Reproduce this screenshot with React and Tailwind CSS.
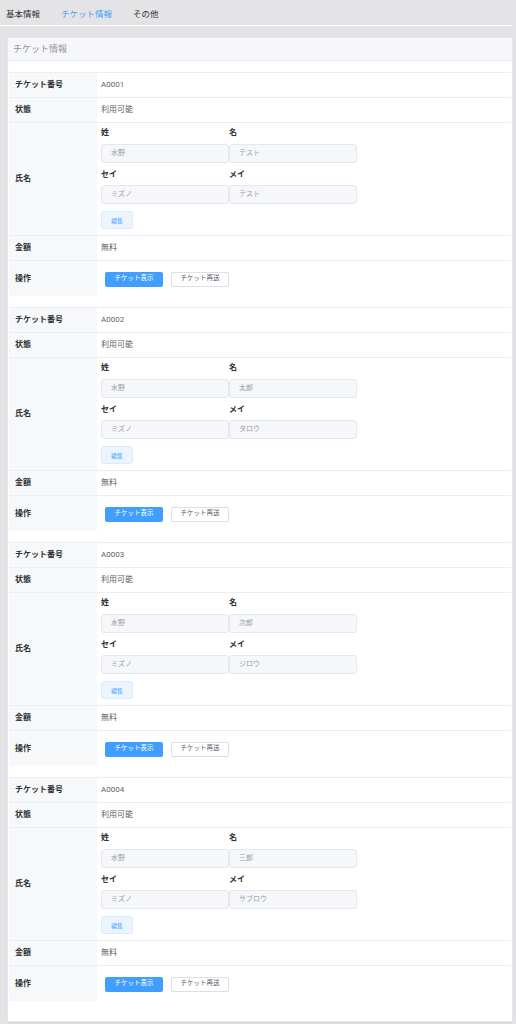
import React from 'react';

const tickets = [
  { no: 'A0001', sei: '水野', mei: 'テスト', seiKana: 'ミズノ', meiKana: 'テスト' },
  { no: 'A0002', sei: '水野', mei: '太郎', seiKana: 'ミズノ', meiKana: 'タロウ' },
  { no: 'A0003', sei: '水野', mei: '次郎', seiKana: 'ミズノ', meiKana: 'ジロウ' },
  { no: 'A0004', sei: '水野', mei: '三郎', seiKana: 'ミズノ', meiKana: 'サブロウ' },
];

const Row = ({ label, children, className = 'h-[25px] border-b border-[#ebeef5]' }) => (
  <div className={`flex ${className}`}>
    <div className="w-[88px] shrink-0 bg-[#f7f8fa] pl-[6px] flex items-center font-bold text-[8px] text-[#303133]">
      {label}
    </div>
    <div className="flex-1 min-w-0 flex items-center">{children}</div>
  </div>
);

const NameField = ({ label }) => (
  <div className="w-[128px]">
    <div className="h-[14px] leading-[14px] font-bold text-[8px] text-[#303133]">{label}</div>
  </div>
);

const Input = ({ value }) => (
  <div className="w-[128px] h-[19px] bg-[#f5f7fa] border border-[#e4e7ed] rounded-[3px] pl-[9px] flex items-center text-[7px] text-[#9a9da3]">
    {value}
  </div>
);

const TicketTable = ({ t }) => (
  <div className="border-t border-[#ebeef5]">
    <Row label="チケット番号">
      <span className="pl-[4px] text-[8px] text-[#606266]">{t.no}</span>
    </Row>
    <Row label="状態">
      <span className="pl-[4px] text-[8px] text-[#606266]">利用可能</span>
    </Row>
    <Row label="氏名" className="border-b border-[#ebeef5]">
      <div className="pl-[4px] pt-[3px] pb-[6px]">
        <div className="flex mb-[4px]">
          <NameField label="姓" />
          <NameField label="名" />
        </div>
        <div className="flex">
          <Input value={t.sei} />
          <Input value={t.mei} />
        </div>
        <div className="flex mt-[5px] mb-[3px]">
          <NameField label="セイ" />
          <NameField label="メイ" />
        </div>
        <div className="flex">
          <Input value={t.seiKana} />
          <Input value={t.meiKana} />
        </div>
        <button className="mt-[7px] w-[32px] h-[18px] rounded-[3px] bg-[#ecf5ff] border border-[#d9ecff] text-[6px] text-[#409eff] flex items-center justify-center">
          編集
        </button>
      </div>
    </Row>
    <Row label="金額">
      <span className="pl-[4px] text-[8px] text-[#606266]">無料</span>
    </Row>
    <Row label="操作" className="h-[35px]">
      <div className="pl-[8px] pt-[1px] flex gap-[8px]">
        <button className="w-[58px] h-[15px] rounded-[2px] bg-[#409eff] text-white text-[6.5px] flex items-center justify-center">
          チケット表示
        </button>
        <button className="w-[58px] h-[15px] rounded-[2px] bg-white border border-[#dcdfe6] text-[#606266] text-[6.5px] flex items-center justify-center">
          チケット再送
        </button>
      </div>
    </Row>
  </div>
);

export default function App() {
  return (
    <div
      className="min-h-[1024px] bg-[#e4e4e6] pb-[3px]"
      style={{ fontFamily: 'Roboto, "Noto Sans CJK JP", sans-serif' }}
    >
      {/* Tabs */}
      <div className="h-[26px] pt-[3px] flex items-center border-b border-white mr-[4px] text-[8.5px] font-normal">
        <span className="pl-[6px] text-[#303133]">基本情報</span>
        <span className="ml-[21px] text-[#4a9ff5]">チケット情報</span>
        <span className="ml-[21px] text-[#303133]">その他</span>
      </div>

      {/* Card */}
      <div className="mt-[11px] ml-[7px] mr-[3px] bg-white border border-[#e4e7ed] shadow-[0_1px_3px_rgba(0,0,0,0.06)]">
        <div className="h-[23px] pt-[1px] bg-[#f6f7fb] border-b border-[#ebeef5] pl-[5px] flex items-center text-[9px] text-[#909399]">
          チケット情報
        </div>
        <div className="px-[1px] pt-[11px] pb-[20px] flex flex-col gap-[11px]">
          {tickets.map(t => (
            <TicketTable key={t.no} t={t} />
          ))}
        </div>
      </div>
    </div>
  );
}
